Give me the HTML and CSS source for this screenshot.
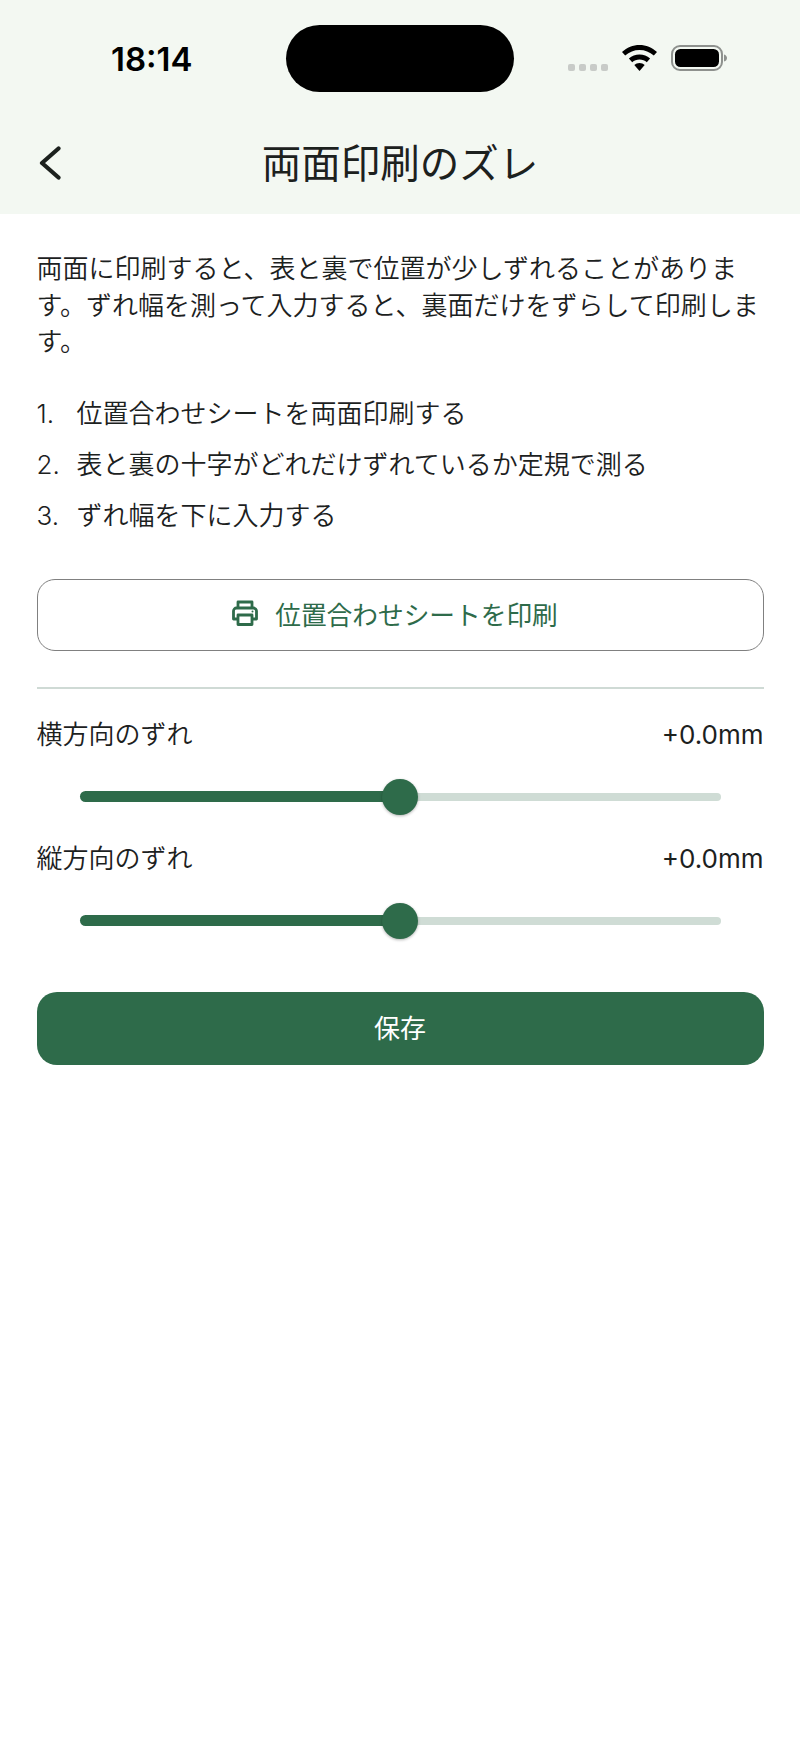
FILE: index.html
```html
<!DOCTYPE html>
<html lang="ja">
<head>
  <meta charset="utf-8">
  <title>両面印刷のズレ</title>
  <link rel="stylesheet" href="styles.css">
</head>
<body>
  <header class="top">
    <div class="status">
      <span class="time">18:14</span>
      <div class="island"></div>
      <div class="status-icons">
        <div class="signal"><i></i><i></i><i></i><i></i></div>
        <svg class="wifi" width="35" height="26" viewBox="0 0 35 26">
          <path d="M17.5 0C11 0 5 2.600 0 7l3.200 3.600C7.200 7 12.200 5 17.500 5s10.300 2 14.300 5.600L35 7C30 2.600 24 0 17.500 0z"/>
          <path d="M17.500 9.500c-4 0-7.700 1.500-10.600 4.100l3.300 3.600c2-1.800 4.500-2.800 7.300-2.800s5.300 1 7.300 2.800l3.300-3.600c-2.900-2.600-6.600-4.100-10.600-4.100z"/>
          <path d="M17.500 18c-2 0-3.800.7-5.200 2l5.200 6 5.200-6c-1.400-1.300-3.200-2-5.200-2z"/>
        </svg>
        <svg class="battery" width="56" height="26" viewBox="0 0 56 26">
          <rect x="1" y="1" width="50" height="24" rx="8" fill="none" stroke="#8e918e" stroke-width="2"/>
          <rect x="4" y="4" width="44" height="18" rx="5.500" fill="#000"/>
          <path d="M53 9.500c2 .5 3 2 3 3.500s-1 3-3 3.500z" fill="#8e918e"/>
        </svg>
      </div>
    </div>
    <div class="navbar">
      <a class="back" href="#">
        <svg width="22" height="34" viewBox="0 0 22 34">
          <path d="M19.500 2.500L3 17l16.500 14.500" fill="none" stroke="#1c211e" stroke-width="4.200" stroke-linecap="round" stroke-linejoin="round"/>
        </svg>
      </a>
      <h1>両面印刷のズレ</h1>
    </div>
  </header>

  <main class="content">
    <p class="intro">両面に印刷すると、表と裏で位置が少しずれることがあります。ずれ幅を測って入力すると、裏面だけをずらして印刷します。</p>

    <ol class="steps">
      <li><span class="num">1.</span>位置合わせシートを両面印刷する</li>
      <li><span class="num">2.</span>表と裏の十字がどれだけずれているか定規で測る</li>
      <li><span class="num">3.</span>ずれ幅を下に入力する</li>
    </ol>

    <button class="btn-outline">
      <svg width="28" height="26" viewBox="0 0 28 26" fill="none" stroke="#2e6b4a" stroke-width="2.800" stroke-linejoin="round">
        <path d="M7 8V2h14v6"/>
        <path d="M7 19H2.500V11a3 3 0 0 1 3-3h17a3 3 0 0 1 3 3v8H21"/>
        <rect x="7" y="15" width="14" height="9.500"/>
        <circle cx="21.500" cy="11.500" r="1" fill="#2e6b4a" stroke="none"/>
      </svg>
      位置合わせシートを印刷
    </button>

    <hr class="divider">

    <div class="adjust">
      <div class="adjust-head">
        <span>横方向のずれ</span>
        <span class="value">+0.0mm</span>
      </div>
      <div class="slider">
        <div class="track-on"></div>
        <div class="thumb"></div>
        <div class="track-off"></div>
      </div>
    </div>

    <div class="adjust">
      <div class="adjust-head">
        <span>縦方向のずれ</span>
        <span class="value">+0.0mm</span>
      </div>
      <div class="slider">
        <div class="track-on"></div>
        <div class="thumb"></div>
        <div class="track-off"></div>
      </div>
    </div>

    <button class="btn-save">保存</button>
  </main>
</body>
</html>
```

FILE: styles.css
```css
html, body {
  margin: 0;
  background: #fff;
}

body {
  min-height: 1738px;
  font-family: Inter, "Noto Sans CJK JP", sans-serif;
  font-size: 26px;
  font-weight: 350;
  color: #1c211e;
}

.top {
  background: #f3f8f2;
  height: 214px;
}

/* status bar */
.status {
  height: 117px;
  display: flex;
  align-items: flex-start;
}

.time {
  width: 80px;
  margin: 39px 0 0 111px;
  font-size: 33px;
  line-height: 40px;
  font-weight: 600;
  color: #000;
}

.island {
  width: 228px;
  height: 67px;
  margin: 25px 0 0 95px;
  border-radius: 34px;
  background: #000;
}

.status-icons {
  display: flex;
  align-items: flex-start;
  margin: 45px 0 0 54px;
}

.signal {
  display: flex;
  gap: 4px;
  margin: 19px 14px 0 0;
}

.signal i {
  width: 7px;
  height: 7px;
  border-radius: 2px;
  background: #c8cbc8;
}

.wifi {
  margin-right: 14px;
}

/* nav */
.navbar {
  height: 97px;
  display: flex;
  align-items: flex-start;
  justify-content: center;
  position: relative;
}

.back {
  position: absolute;
  left: 39px;
  top: 29px;
}

h1 {
  margin: 22px 0 0;
  font-size: 39.500px;
  line-height: 50px;
  font-weight: 400;
}

/* page body */
.content {
  padding: 0 36.500px;
}

.intro {
  margin: 37px 0 0;
  line-height: 36.500px;
}

.steps {
  list-style: none;
  margin: 27px 0 0;
  padding: 0;
}

.steps li {
  display: flex;
  height: 51px;
  line-height: 51px;
}

.num {
  width: 40px;
}

.btn-outline {
  display: flex;
  align-items: center;
  justify-content: center;
  gap: 16px;
  width: 100%;
  height: 72px;
  margin-top: 38px;
  padding: 0 11px 3px 0;
  border: 1.500px solid #808080;
  border-radius: 18px;
  background: #fff;
  color: #2e6b4a;
  font: inherit;
  font-size: 25.700px;
  font-weight: 400;
}

.divider {
  height: 2px;
  margin: 36px 0 0;
  border: 0;
  background: #cfdad5;
}

.adjust-head {
  display: flex;
  justify-content: space-between;
  height: 46px;
  line-height: 46px;
}

.value {
  font-weight: 400;
}

.adjust:first-of-type {
  margin-top: 23px;
}

.slider {
  display: flex;
  align-items: center;
  height: 36px;
  margin: 21px 43px 21px;
}

.track-on {
  flex: 1;
  height: 11px;
  border-radius: 6px 0 0 6px;
  background: #2e6b4a;
}

.track-off {
  flex: 1;
  height: 8px;
  border-radius: 0 4px 4px 0;
  background: #cfdcd5;
}

.thumb {
  flex: none;
  width: 36px;
  height: 36px;
  margin: 0 -18px;
  position: relative;
  border-radius: 50%;
  background: #2e6b4a;
  box-shadow: 0 1px 3px rgba(0, 0, 0, 0.3);
}

.btn-save {
  display: block;
  width: 100%;
  height: 73px;
  margin-top: 53px;
  padding: 0 0 3px;
  border: 0;
  border-radius: 20px;
  background: #2e6b4a;
  color: #fff;
  font: inherit;
  font-weight: 400;
}
```
